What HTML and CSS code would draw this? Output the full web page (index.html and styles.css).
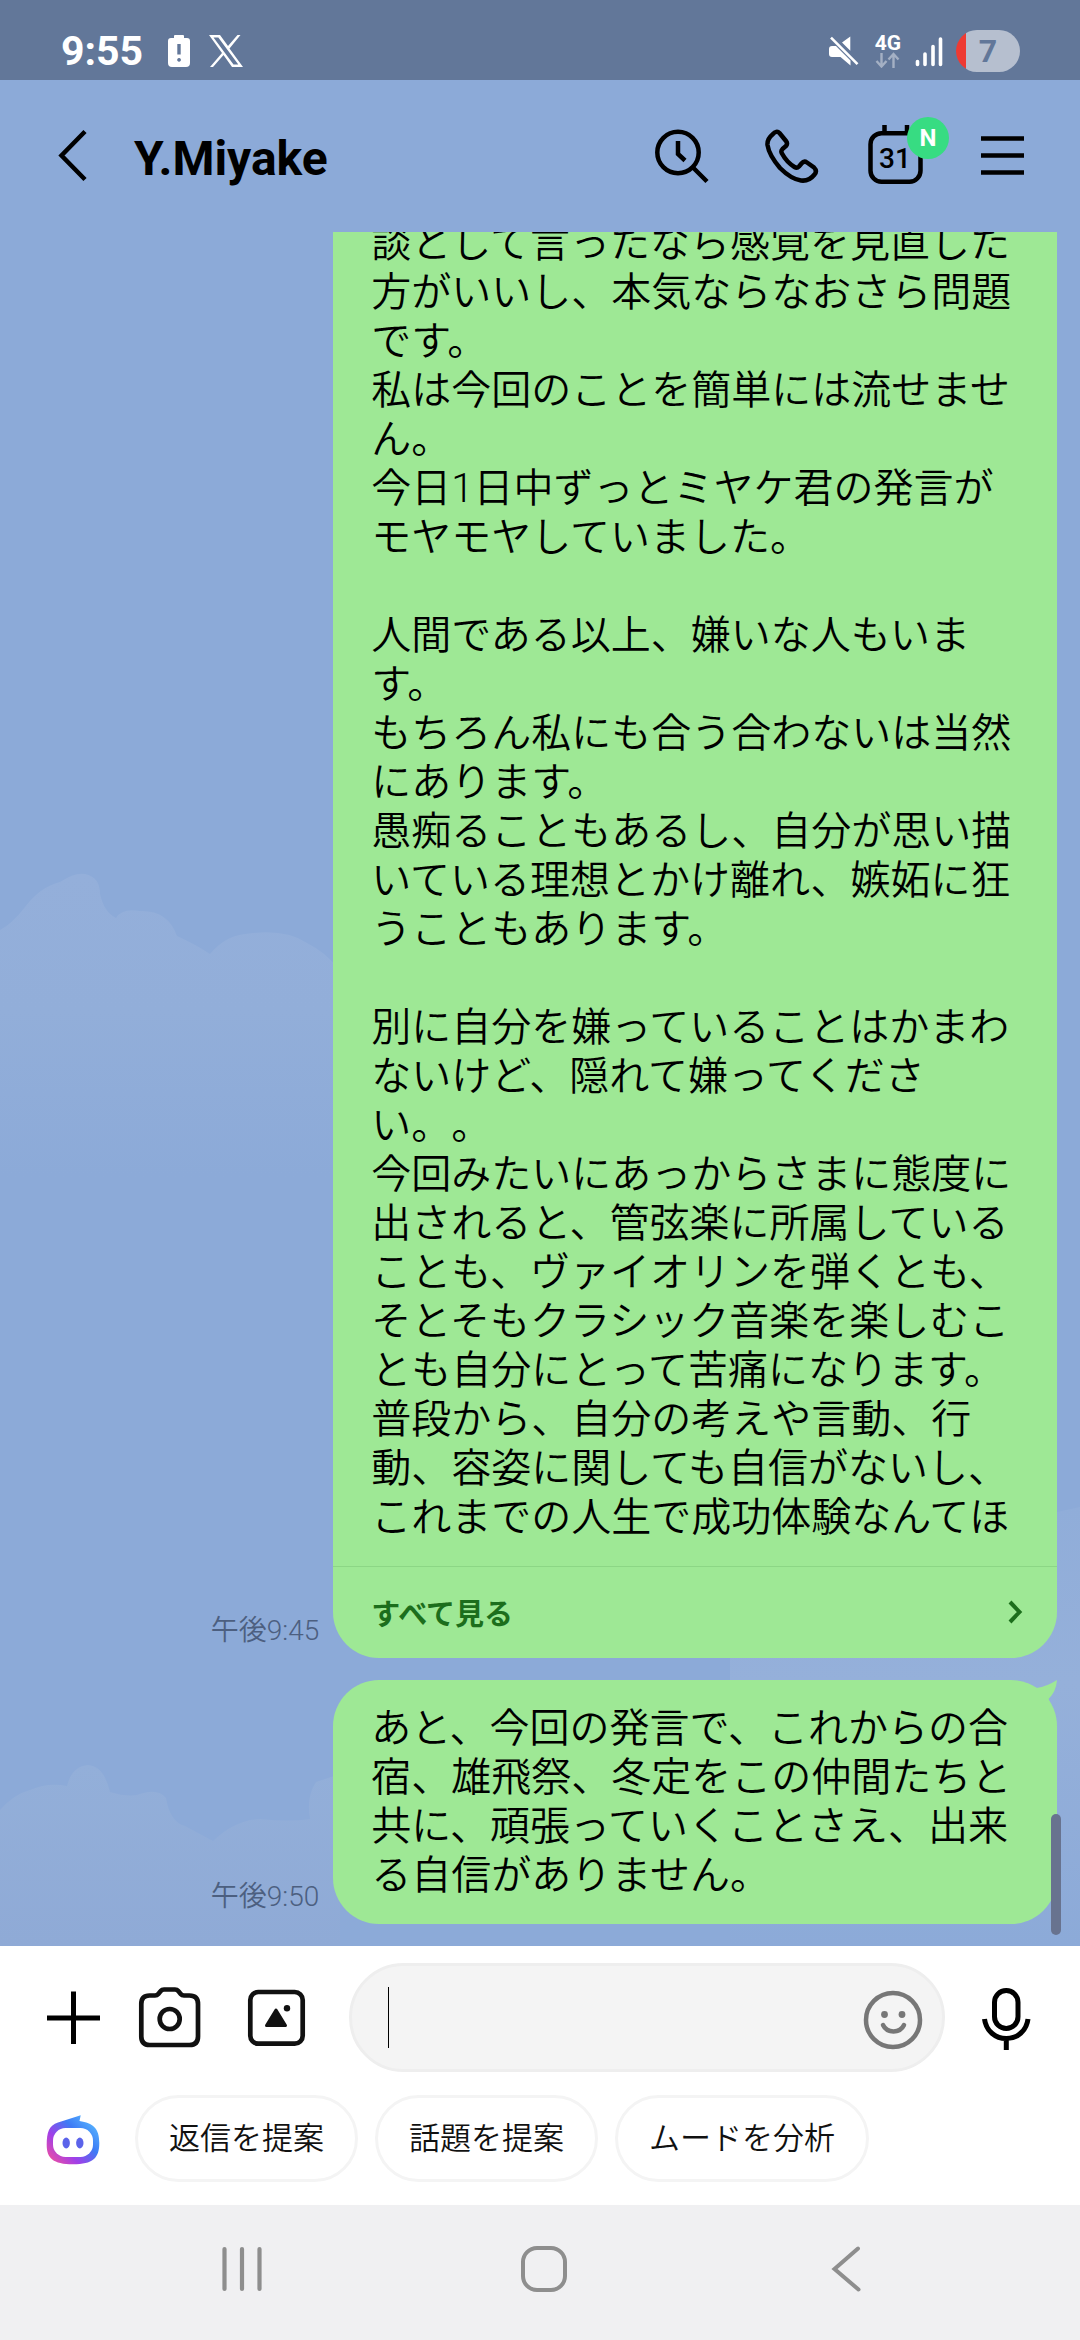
FILE: index.html
```html
<!DOCTYPE html>
<html lang="ja">
<head>
<meta charset="utf-8">
<meta name="viewport" content="width=device-width, initial-scale=1">
<title>Y.Miyake</title>
<link rel="stylesheet" href="styles.css">
</head>
<body>
<div class="screen">
  <div class="status">
    <span class="clock">9:55</span>
    <svg class="status-battery-alert" width="24" height="34" viewBox="0 0 24 34"><path fill="#fff" fill-rule="evenodd" d="M8 1h8q1 0 1 1v2h3q3 0 3 3v22q0 4-4 4H5q-4 0-4-4V7q0-3 3-3h3V2q0-1 1-1zM10.300 10v10.500h3.400V10zM12 24a1.900 1.900 0 1 0 .1 0z"/></svg>
    <svg class="status-x" width="36" height="34" viewBox="0 0 36 34"><path fill="#fff" fill-rule="evenodd" d="M1 1h11l8 11L29.500 1h3L21.500 14.500 35 33H24l-8.500-12L5 33H2l12-14zM5.500 3.500l20 27h4.800l-20-27z"/></svg>
    <div class="status-right">
      <svg width="32" height="32" viewBox="0 0 32 32" fill="#fff"><path d="M2 14q0-3 3-3h4l14.500 14.500v5l-10-8.500H5q-3 0-3-3zM15 7.500l8.300-6V15.700z"/><path d="M4 2.700l26.500 26.500" stroke="#fff" stroke-width="2.600"/></svg>
      <div class="network">
        <span>4G</span>
        <svg width="25" height="16" viewBox="0 0 25 16" fill="none" stroke="#a4b0c4" stroke-width="2.400"><path d="M6.500 1v13M1.500 9l5 5.500 5-5.500M18.500 16V2.500M13.500 7.500l5-5.500 5 5.500"/></svg>
      </div>
      <svg width="28" height="31" viewBox="0 0 28 31" stroke="#fff" stroke-width="3.600" stroke-linecap="round"><path d="M2.500 25.500v3M10 18v10.500M18 10.500v18M25.500 3v25.500"/></svg>
      <div class="battery">7</div>
    </div>
  </div>

  <header class="header">
    <button class="icon-btn" aria-label="戻る"><svg width="64" height="64" viewBox="0 0 64 64" fill="none" stroke="#000" stroke-width="4.500"><path d="M45 7.500L21.500 31.500 45 55.500"/></svg></button>
    <h1 class="title">Y.Miyake</h1>
    <div class="actions">
      <button class="icon-btn" aria-label="検索"><svg width="64" height="64" viewBox="0 0 64 64" fill="none" stroke="#000" stroke-width="4.500"><circle cx="29" cy="28.500" r="20.700"/><path d="M44 43.500l14 14M29 17v13l7 6.500"/></svg></button>
      <button class="icon-btn" aria-label="通話"><svg width="64" height="64" viewBox="0 0 64 64" fill="none" stroke="#000" stroke-width="4.500"><path transform="translate(3)" d="M13.500 10.500Q17.500 6 20.500 9L27 17q2 2.500 0 5l-3.500 3q-2 2 -.5 4.500Q27.500 38 35.500 43q2.500 1.500 4.500-.5l2.500-3q2.500-3 5.500-1l7 5q3.500 3.500 .5 7Q50 57.500 42 56.500 32 55 21 44 10 31 8.500 21 8 15 13.500 10.500z"/></svg></button>
      <button class="icon-btn" aria-label="カレンダー"><svg width="64" height="64" viewBox="0 0 64 64"><path d="M21.500 1v8M44 1v8" stroke="#000" stroke-width="4.500"/><rect x="7.500" y="9.200" width="50" height="48.500" rx="11" fill="none" stroke="#000" stroke-width="4.500"/><text class="date" x="32" y="44" text-anchor="middle">31</text></svg><span class="badge">N</span></button>
      <button class="icon-btn" aria-label="メニュー"><svg width="64" height="64" viewBox="0 0 64 64" stroke="#000" stroke-width="4.500"><path d="M11 14.500h43M11 31.500h43M11 48.500h43"/></svg></button>
    </div>
  </header>

  <main class="chat">
    <svg class="sky" viewBox="0 0 1080 1714" preserveAspectRatio="none" aria-hidden="true">
      <defs>
        <linearGradient id="c1" x1="0" y1="0" x2="0" y2="1"><stop offset="0" stop-color="#94afda"/><stop offset=".45" stop-color="#92aed9"/><stop offset="1" stop-color="#8caad8"/></linearGradient>
        <linearGradient id="c2" x1="0" y1="0" x2="0" y2="1"><stop offset="0" stop-color="#93afd9"/><stop offset="1" stop-color="#8faad6"/></linearGradient>
        <linearGradient id="c3" x1="0" y1="0" x2="0" y2="1"><stop offset="0" stop-color="#90add9"/><stop offset=".4" stop-color="#95b0da"/><stop offset="1" stop-color="#8caad8"/></linearGradient>
      </defs>
      <path fill="url(#c1)" d="M0 698Q12 692 25 675 40 655 60 650 75 640 85 642 100 645 100 662 104 680 116 686 122 676 140 679 168 678 177 704 195 712 210 722 225 704 245 702 285 696 307 711 325 720 338 736V945H0z"/>
      <path fill="url(#c2)" d="M0 1578Q14 1562 30 1558 48 1550 67 1554 72 1534 88 1533 104 1534 110 1560 130 1566 140 1562 158 1556 166 1566 170 1590 185 1594L213 1609Q235 1588 260 1587 290 1590 310 1587 306 1565 316 1550L340 1542V1714H0z"/>
      <path fill="url(#c3)" d="M730 1426Q850 1420 900 1350 960 1300 1080 1275V1714H730z"/>
    </svg>
    <div class="row">
      <time class="time">午後9:45</time>
      <div class="bubble bubble-long">
        <p class="text">談として言ったなら感覚を見直した方がいいし、本気ならなおさら問題です。<br>私は今回のことを簡単には流せません。<br>今日1日中ずっとミヤケ君の発言がモヤモヤしていました。<br><br>人間である以上、嫌いな人もいます。<br>もちろん私にも合う合わないは当然にあります。<br>愚痴ることもあるし、自分が思い描いている理想とかけ離れ、嫉妬に狂うこともあります。<br><br>別に自分を嫌っていることはかまわないけど、隠れて嫌ってください。。<br>今回みたいにあっからさまに態度に出されると、管弦楽に所属していることも、ヴァイオリンを弾くとも、そとそもクラシック音楽を楽しむことも自分にとって苦痛になります。<br>普段から、自分の考えや言動、行動、容姿に関しても自信がないし、これまでの人生で成功体験なんてほ</p>
        <button class="see-all"><span>すべて見る</span><svg width="18" height="26" viewBox="0 0 18 26" fill="none" stroke="#1c6e1c" stroke-width="4"><path d="M3 3l9.500 10L3 23"/></svg></button>
      </div>
    </div>
    <div class="row">
      <time class="time">午後9:50</time>
      <div class="bubble">
        <p class="text">あと、今回の発言で、これからの合宿、雄飛祭、冬定をこの仲間たちと共に、頑張っていくことさえ、出来る自信がありません。</p>
        <svg class="tail" width="26" height="26" viewBox="0 0 26 26"><path fill="#9ee895" d="M0 6L5.500 8Q16 6.500 26 0 25 12 17.500 19L20 26H0z"/></svg>
      </div>
    </div>
    <div class="scrollbar"></div>
  </main>

  <footer class="composer">
    <div class="input-row">
      <div class="tools">
        <button class="tool-btn" aria-label="追加"><svg width="72" height="72" viewBox="0 0 72 72" stroke="#000" stroke-width="5"><path d="M9 36h53M35.500 9.500V62"/></svg></button>
        <button class="tool-btn" aria-label="カメラ"><svg width="72" height="72" viewBox="0 0 72 72" fill="none" stroke="#111" stroke-width="4.700"><path d="M11.500 13.500H17q2 0 3.300-1.600l2.400-2.800Q24 7.500 26 7.500h11q2 0 3.300 1.600l2.400 2.800Q44 13.500 46 13.500h5.500q8.500 0 8.500 8.500v32.500q0 8.500-8.500 8.500h-40Q3.300 63 3.300 54.500V22q0-8.500 8.200-8.500z"/><circle cx="31.700" cy="37" r="10"/></svg></button>
        <button class="tool-btn" aria-label="写真"><svg width="72" height="72" viewBox="0 0 72 72" fill="#111"><rect x="12.300" y="10" width="52.400" height="51.700" rx="8" fill="none" stroke="#111" stroke-width="4.700"/><path d="M38 28l9.500 15.500h-19z" stroke="#111" stroke-width="3" stroke-linejoin="round"/><circle cx="49" cy="26.300" r="3.200"/></svg></button>
      </div>
      <div class="field">
        <span class="caret"></span>
        <input class="entry" type="text" aria-label="メッセージを入力">
        <button class="tool-btn" aria-label="スタンプ"><svg width="72" height="72" viewBox="0 0 72 72" fill="none" stroke="#777" stroke-width="4.500"><circle cx="36" cy="38" r="27"/><path d="M26 43c4 8.500 17 8.500 21 0" stroke-linecap="round"/><g fill="#777" stroke="none"><circle cx="27.500" cy="32.500" r="3.400"/><circle cx="45" cy="32.500" r="3.400"/></g></svg></button>
      </div>
      <button class="tool-btn" aria-label="音声入力"><svg width="72" height="72" viewBox="0 0 72 72" fill="none" stroke="#000" stroke-width="5"><rect x="24.500" y="8.500" width="23.500" height="38" rx="11.700"/><path d="M14.500 37c1.500 12 11 19.500 21.800 19.500S56.500 49 58 37M36.300 56v12"/></svg></button>
    </div>
    <div class="suggest-row">
      <svg class="bot" width="56" height="56" viewBox="0 0 56 56">
        <defs><linearGradient id="bot" x1=".05" y1=".95" x2=".95" y2=".15"><stop offset="0" stop-color="#f04fa0"/><stop offset=".33" stop-color="#a03fe8"/><stop offset=".66" stop-color="#3d7bf5"/><stop offset="1" stop-color="#58b8ff"/></linearGradient></defs>
        <path fill="url(#bot)" d="M1.700 34C1.700 21 4 14.500 13 11.500L35.700 4.300 34.500 10C48 12 54.300 17 54.300 32 54.300 47 48 53.300 28 53.300 8 53.300 1.700 47 1.700 34z"/>
        <rect x="8" y="17" width="40" height="29" rx="12.500" fill="#fff"/>
        <g fill="#5b63ea"><ellipse cx="21.200" cy="32" rx="3.700" ry="5.400"/><ellipse cx="34.800" cy="32" rx="3.700" ry="5.400"/></g>
      </svg>
      <div class="chips">
        <button class="chip">返信を提案</button>
        <button class="chip">話題を提案</button>
        <button class="chip">ムードを分析</button>
      </div>
    </div>
  </footer>

  <nav class="nav">
    <button class="nav-btn" aria-label="履歴"><svg width="48" height="48" viewBox="0 0 48 48" stroke="#8e8e8e" stroke-width="4.200" stroke-linecap="round"><path d="M6.500 4v40M24 4v40M41.500 4v40"/></svg></button>
    <button class="nav-btn" aria-label="ホーム"><svg width="48" height="48" viewBox="0 0 48 48" fill="none" stroke="#8e8e8e" stroke-width="4"><rect x="3" y="3" width="42" height="42" rx="14"/></svg></button>
    <button class="nav-btn" aria-label="戻る"><svg width="48" height="48" viewBox="0 0 48 48" fill="none" stroke="#8e8e8e" stroke-width="4" stroke-linecap="round"><path d="M36 3.500L12.500 24 36.500 44.500"/></svg></button>
  </nav>
</div>
</body>
</html>
```

FILE: styles.css
```css
* { box-sizing: border-box; }

body {
  margin: 0;
  font-family: Roboto, "Noto Sans CJK JP", sans-serif;
  color: #000;
  background: #8caad8;
}

button {
  padding: 0;
  border: 0;
  background: none;
  color: inherit;
  font: inherit;
}

svg { display: block; }

.screen {
  display: flex;
  flex-direction: column;
  height: 100vh;
}

/* Status bar */
.status {
  display: flex;
  align-items: center;
  height: 80px;
  padding: 22px 60px 0 61px;
  background: #627799;
  color: #fff;
  flex: none;
}
.clock { font-size: 41px; line-height: 48px; font-weight: 700; }
.status-battery-alert { margin-left: 24px; }
.status-x { margin-left: 17px; }
.status-right {
  display: flex;
  align-items: center;
  margin-left: auto;
}
.network {
  display: flex;
  flex-direction: column;
  align-items: center;
  margin: 0 14px 0 16px;
  font-size: 21px;
  line-height: 18px;
  font-weight: 700;
}
.battery {
  width: 64px;
  height: 42px;
  margin-left: 13px;
  border-radius: 21px;
  background: linear-gradient(90deg, #ee3a33 10px, #b6bfcf 10px);
  color: #627799;
  font-size: 32px;
  line-height: 42px;
  font-weight: 700;
  text-align: center;
}

/* Header */
.header {
  display: flex;
  align-items: center;
  height: 152px;
  padding: 0 46px 0 40px;
  flex: none;
}
.icon-btn {
  position: relative;
  width: 64px;
  height: 64px;
  flex: none;
}
.title {
  margin: 0 0 0 30px;
  padding-top: 6px;
  font-size: 48px;
  line-height: 56px;
  font-weight: 700;
}
.actions {
  display: flex;
  gap: 43px;
  margin-left: auto;
}
.date {
  font-family: Roboto, sans-serif;
  font-size: 28px;
  font-weight: 500;
}
.badge {
  position: absolute;
  top: -7px;
  right: -22px;
  width: 42px;
  height: 42px;
  border-radius: 50%;
  background: #37dc82;
  color: #fff;
  font-size: 24px;
  line-height: 42px;
  font-weight: 700;
}

/* Conversation */
.chat {
  position: relative;
  display: flex;
  flex-direction: column;
  justify-content: flex-end;
  gap: 22px;
  flex: 1;
  min-height: 0;
  padding: 0 23px 22px;
  overflow: hidden;
}
.sky {
  position: absolute;
  inset: 0;
  width: 100%;
  height: 100%;
}
.row {
  position: relative;
  display: flex;
  flex: none;
  justify-content: flex-end;
  align-items: flex-end;
  gap: 14px;
}
.time {
  margin-bottom: 11px;
  color: #4c5f80;
  font-size: 28px;
  font-weight: 350;
  line-height: 32px;
  white-space: nowrap;
}
.bubble {
  position: relative;
  max-width: 70%;
  border-radius: 46px;
  background: #9ee895;
}
.bubble-long { border-radius: 0 0 46px 46px; }
.text {
  margin: 0;
  padding: 24px 38px;
  font-size: 40px;
  font-weight: 350;
  line-height: 49px;
  text-spacing-trim: space-all;
}
.see-all {
  display: flex;
  align-items: center;
  justify-content: space-between;
  width: 100%;
  height: 92px;
  padding: 0 32px 2px 38px;
  border-top: 1px solid #8cd685;
  color: #1c6e1c;
  font-size: 29px;
  font-weight: 700;
}
.tail {
  position: absolute;
  top: 0;
  right: 0;
}
.scrollbar {
  position: absolute;
  right: 19px;
  bottom: 11px;
  width: 10px;
  height: 121px;
  border-radius: 5px;
  background: #68738f;
}

/* Composer */
.composer {
  display: flex;
  flex-direction: column;
  gap: 23px;
  padding: 17px 38px 23px;
  background: #fff;
  flex: none;
}
.input-row { display: flex; align-items: center; }
.tools { display: flex; gap: 28px; margin-right: 39px; }
.tool-btn { width: 72px; height: 72px; flex: none; }
.field {
  display: flex;
  align-items: center;
  flex: 1;
  min-width: 0;
  height: 109px;
  margin-right: 25px;
  padding: 0 13px 0 36px;
  border: 3px solid #eee;
  border-radius: 55px;
  background: #f4f4f4;
}
.caret { width: 1px; height: 61px; background: #000; }
.entry {
  flex: 1;
  min-width: 0;
  height: 61px;
  padding: 0;
  border: 0;
  outline: 0;
  background: none;
  font: inherit;
  font-size: 40px;
}
.suggest-row { display: flex; align-items: center; }
.bot { margin: 0 34px 0 7px; }
.chips { display: flex; gap: 17px; }
.chip {
  height: 87px;
  padding: 0 31px;
  border: 3px solid #f4f4f4;
  border-radius: 44px;
  color: #111;
  font-size: 31px;
  font-weight: 350;
  line-height: 40px;
}

/* System navigation */
.nav {
  display: grid;
  grid-template-columns: repeat(3, 1fr);
  align-items: center;
  height: 135px;
  padding: 0 83px 7px 91px;
  background: #f0f0f2;
  flex: none;
}
.nav-btn { display: grid; place-items: center; height: 96px; }
```
